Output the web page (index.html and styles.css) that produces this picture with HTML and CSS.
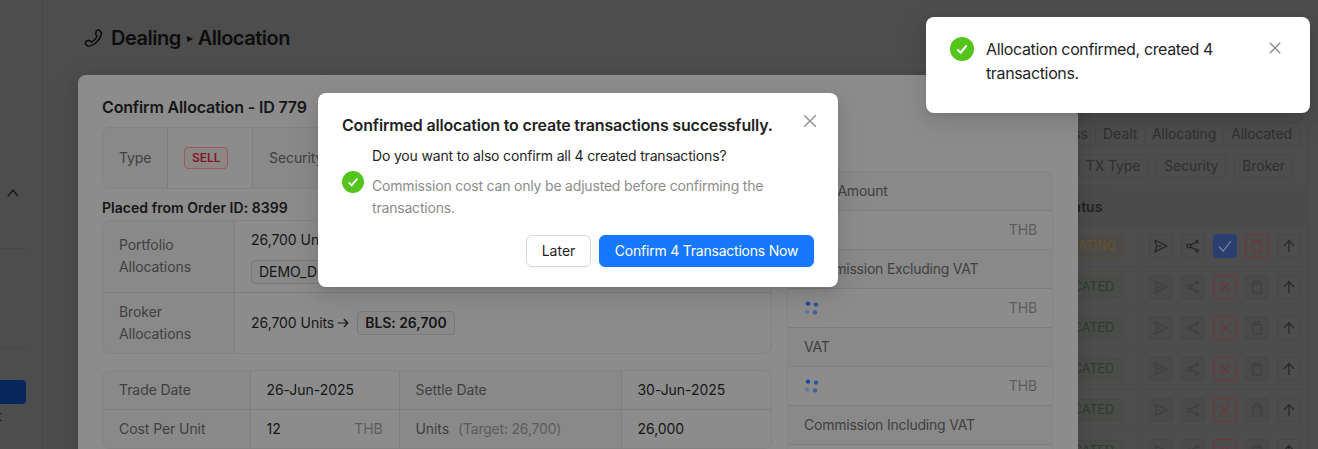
FILE: index.html
```html
<!DOCTYPE html>
<html lang="en">
<head>
<meta charset="utf-8">
<title>Dealing - Allocation</title>
<link rel="stylesheet" href="styles.css">
</head>
<body>
<svg class="defs" width="0" height="0">
  <defs>
    <symbol id="send" viewBox="0 0 16 16"><path d="M2 2.2 14 8 2 13.8 3.7 8ZM3.7 8H8.5"/></symbol>
    <symbol id="share" viewBox="0 0 16 16"><circle cx="4" cy="8" r="1.9"/><circle cx="12" cy="3.6" r="1.3"/><circle cx="12" cy="12.4" r="1.3"/><path d="M5.7 7.1 10.8 4.2M5.7 8.9l5.1 2.9"/></symbol>
    <symbol id="check" viewBox="0 0 16 16"><path d="M2 8.6 6.2 13 14 3"/></symbol>
    <symbol id="cross" viewBox="0 0 16 16"><path d="M2.8 2.8 13.2 13.2M13.2 2.8 2.8 13.2"/></symbol>
    <symbol id="trash" viewBox="0 0 16 16"><path d="M2.3 4.6H13.7M3.6 4.6V14H12.4V4.6M5.2 4.6V2.3H10.8V4.6"/></symbol>
    <symbol id="up" viewBox="0 0 16 16"><path d="M8 14V3M3 7.8 8 2.7 13 7.8"/></symbol>
    <symbol id="right" viewBox="0 0 16 16"><path d="M2 8H13.5M9 3.4 13.6 8 9 12.6"/></symbol>
    <symbol id="dots" viewBox="0 0 16 16"><circle cx="4" cy="3.6" r="2.2" fill="#1448a0"/><circle cx="12" cy="4.6" r="2.2" fill="#2c559b"/><circle cx="11" cy="12.4" r="2.2" fill="#405f98"/><circle cx="3" cy="11.6" r="2.2" fill="#6577a0"/></symbol>
    <symbol id="success" viewBox="0 0 22 22"><circle cx="11" cy="11" r="11" fill="#52c41a"/><path d="m6.7 11.4 3 3 5.6-6.8" fill="none" stroke="#fff" stroke-width="1.9"/></symbol>
  </defs>
</svg>
<div class="screen">
  <aside class="sidebar">
    <svg class="chevron" viewBox="0 0 12 8"><path d="M.8 7.4 6 1l5.2 6.4"/></svg>
    <div class="rule"></div>
    <div class="rule rule-second"></div>
    <div class="selected"></div>
    <div class="side-text">t</div>
  </aside>
  <main class="page">
    <h1 class="page-title">
      <svg class="phone" viewBox="0 0 20 20"><path d="M13.1 1.7 15.8 1 18.5 4.1C17.8 10.8 11.1 17.7 4.3 18.2L1.3 15.5 2.2 12.8 5.7 11.9 8 13.7C10.6 12.5 12.8 10.2 13.8 7.7L12.2 5.2Z"/></svg>
      <span>Dealing</span><i class="caret"></i><span>Allocation</span>
    </h1>
    <section class="orders">
      <div class="segments"><span class="seg-first">In Progress</span><span class="seg-dealt">Dealt</span><span class="seg-allocating">Allocating</span><span class="seg-allocated">Allocated</span></div>
      <div class="filters"><span>TX Type</span><span>Security</span><span>Broker</span></div>
      <div class="orders-head">Status</div>
      <div class="order active"><b class="status">ALLOCATING</b><div class="tools"><i><svg><use href="#send"/></svg></i><i><svg><use href="#share"/></svg></i><i class="primary"><svg><use href="#check"/></svg></i><i class="danger"><svg><use href="#trash"/></svg></i><i class="on"><svg><use href="#up"/></svg></i></div></div>
      <div class="order"><b class="status">ALLOCATED</b><div class="tools"><i><svg><use href="#send"/></svg></i><i><svg><use href="#share"/></svg></i><i class="danger"><svg><use href="#cross"/></svg></i><i><svg><use href="#trash"/></svg></i><i class="on"><svg><use href="#up"/></svg></i></div></div>
      <div class="order"><b class="status">ALLOCATED</b><div class="tools"><i><svg><use href="#send"/></svg></i><i><svg><use href="#share"/></svg></i><i class="danger"><svg><use href="#cross"/></svg></i><i><svg><use href="#trash"/></svg></i><i class="on"><svg><use href="#up"/></svg></i></div></div>
      <div class="order"><b class="status">ALLOCATED</b><div class="tools"><i><svg><use href="#send"/></svg></i><i><svg><use href="#share"/></svg></i><i class="danger"><svg><use href="#cross"/></svg></i><i><svg><use href="#trash"/></svg></i><i class="on"><svg><use href="#up"/></svg></i></div></div>
      <div class="order"><b class="status">ALLOCATED</b><div class="tools"><i><svg><use href="#send"/></svg></i><i><svg><use href="#share"/></svg></i><i class="danger"><svg><use href="#cross"/></svg></i><i><svg><use href="#trash"/></svg></i><i class="on"><svg><use href="#up"/></svg></i></div></div>
      <div class="order"><b class="status">ALLOCATED</b><div class="tools"><i><svg><use href="#send"/></svg></i><i><svg><use href="#share"/></svg></i><i class="danger"><svg><use href="#cross"/></svg></i><i><svg><use href="#trash"/></svg></i><i class="on"><svg><use href="#up"/></svg></i></div></div>
    </section>
  </main>

  <section class="modal">
    <h2 class="modal-title">Confirm Allocation - ID 779</h2>
    <div class="columns">
      <div class="left">
        <div class="desc summary">
          <div class="label">Type</div><div class="value"><span class="tag-sell">SELL</span></div>
          <div class="label">Security</div><div class="value"></div>
        </div>
        <h3 class="placed">Placed from Order ID: 8399</h3>
        <div class="desc allocations">
          <div class="label">Portfolio<br>Allocations</div>
          <div class="value stack"><span>26,700 Units</span><span class="tag">DEMO_DEALING</span></div>
          <div class="label">Broker<br>Allocations</div>
          <div class="value"><span>26,700 Units</span><svg class="arrow"><use href="#right"/></svg><span class="tag strong">BLS: 26,700</span></div>
        </div>
        <div class="desc terms">
          <div class="label">Trade Date</div><div class="value">26-Jun-2025</div>
          <div class="label">Settle Date</div><div class="value">30-Jun-2025</div>
          <div class="label">Cost Per Unit</div><div class="value between"><span>12</span><span class="unit">THB</span></div>
          <div class="label">Units <span class="target">(Target: 26,700)</span></div><div class="value">26,000</div>
        </div>
      </div>
      <div class="desc amounts">
        <div class="label">Cost Amount</div>
        <div class="value between"><svg class="spin"><use href="#dots"/></svg><span class="unit">THB</span></div>
        <div class="label">Commission Excluding VAT</div>
        <div class="value between"><svg class="spin"><use href="#dots"/></svg><span class="unit">THB</span></div>
        <div class="label">VAT</div>
        <div class="value between"><svg class="spin"><use href="#dots"/></svg><span class="unit">THB</span></div>
        <div class="label">Commission Including VAT</div>
        <div class="value"></div>
      </div>
    </div>
  </section>

  <section class="dialog">
    <header><h2>Confirmed allocation to create transactions successfully.</h2><svg class="close"><use href="#cross"/></svg></header>
    <div class="message">
      <svg class="ok"><use href="#success"/></svg>
      <div><p class="question">Do you want to also confirm all 4 created transactions?</p><p class="hint">Commission cost can only be adjusted before confirming the<br>transactions.</p></div>
    </div>
    <footer><button class="btn">Later</button><button class="btn btn-primary">Confirm 4 Transactions Now</button></footer>
  </section>

  <section class="toast">
    <svg class="ok"><use href="#success"/></svg>
    <p>Allocation confirmed, created 4<br>transactions.</p>
    <svg class="close"><use href="#cross"/></svg>
  </section>
</div>
</body>
</html>
```
FILE: styles.css
```css
* { box-sizing: border-box; }
body { margin: 0; font: 14px/22px Inter, "Liberation Sans", sans-serif; color: #161616; }
h1, h2, h3, p { margin: 0; }
svg { fill: none; stroke: currentColor; flex: none; }
.defs { position: absolute; }
#dots, .ok { stroke: none; }
.screen { position: relative; width: 1318px; height: 449px; overflow: hidden; background: #4d4d4d; display: flex; }

.sidebar { width: 43px; flex: none; border-right: 1px solid #484848; padding-top: 189px; }
.chevron { display: block; width: 12px; height: 8px; margin-left: 7px; color: #151515; stroke-width: 1.3; }
.rule { width: 26px; height: 1px; background: #474747; margin-top: 51px; }
.rule-second { margin-top: 98px; }
.selected { width: 26px; height: 24px; margin-top: 32px; background: #07275c; border-radius: 0 4px 4px 0; }
.side-text { margin: 1px 0 0 -3px; color: #111; }

.page { flex: 1; padding: 22px 9px 0 41px; }
.page-title { display: flex; align-items: center; height: 32px; font-size: 20px; font-weight: 600; letter-spacing: -.5px; color: #0d0d0d; }
.phone { width: 19px; height: 19px; margin-right: 8px; stroke-width: 1.6; }
.caret { border-left: 6px solid #0d0d0d; border-top: 3.5px solid transparent; border-bottom: 3.5px solid transparent; margin: 2px 5px 0 6px; }
.orders { margin-top: 68px; border-right: 1px solid #494949; color: #303030; }
.segments { display: flex; justify-content: flex-end; padding-right: 8px; }
.segments span, .filters span { height: 24px; border: 1px solid #484848; padding: 0 7px; line-height: 22px; white-space: nowrap; text-align: center; }
.segments span + span { border-left: 0; }
.segments span:last-child { border-radius: 0 4px 4px 0; }
.seg-dealt { width: 49px; }
.seg-allocating { width: 79px; letter-spacing: -.15px; }
.seg-allocated { width: 76px; letter-spacing: -.15px; }
.filters { display: flex; justify-content: flex-end; gap: 8px; padding: 8px 15px 0 0; letter-spacing: -.12px; }
.filters span { border-radius: 4px; }
.orders-head { margin-top: 8px; height: 39px; line-height: 39px; padding-left: 975px; background: #4b4b4b; border-top: 1px solid #494949; font-weight: 600; color: #222; }
.order { height: 41px; display: flex; align-items: center; justify-content: flex-end; border-top: 1px solid #494949; }
.status { height: 22px; line-height: 20px; padding: 0 8px; margin-right: 18px; border: 1px solid #454b40; border-radius: 4px; background: #4a4c49; color: #2b3d2b; font-weight: 400; font-size: 12.5px; }
.active .status { border-color: #514a3d; background: #4d4b47; color: #69532f; margin-right: 16px; }
.tools { display: flex; align-items: center; gap: 8px; height: 39px; padding: 0 7px; border-left: 1px solid #494949; }
.tools i { width: 24px; height: 24px; display: grid; place-items: center; border: 1px solid #474747; border-radius: 4px; color: #3f3f3f; background: #4a4a4a; }
.active .tools i, .tools i.on { color: #252525; background: #4d4d4d; }
.tools svg { width: 16px; height: 16px; stroke-width: 1.2; }
.tools .danger, .active .tools .danger { border-color: #6e3638; color: #6e3638; background: #4d4d4d; }
.active .tools .primary { border-color: #283f70; background: #283f70; color: #80899c; }

.modal { position: absolute; left: 78px; top: 75px; width: 1000px; height: 500px; padding: 20px 25px 0 24px; background: #8c8c8c; border-radius: 8px; box-shadow: 0 6px 16px rgba(0,0,0,.08), 0 3px 6px -4px rgba(0,0,0,.12), 0 9px 28px 8px rgba(0,0,0,.05); }
.modal-title { font-size: 16px; line-height: 24px; font-weight: 600; letter-spacing: -.15px; height: 32px; }
.columns { display: grid; grid-template-columns: 669.5px 266px; gap: 15.5px; }
.desc { display: grid; border: 1px solid #838383; border-radius: 8px; overflow: hidden; }
.label, .value { display: flex; align-items: center; padding: 0 16px; border-right: 1px solid #7e7e7e; border-bottom: 1px solid #7e7e7e; white-space: nowrap; }
.label { background: #898989; color: #404040; letter-spacing: -.08px; }
.value { letter-spacing: -.05px; }
.between { justify-content: space-between; }
.summary { grid-template-columns: 65px 85px 98px 1fr; height: 62px; }
.tag-sell { height: 22px; line-height: 20px; padding: 0 7px; border: 1px solid #9b5b59; border-radius: 4px; background: #8e8685; color: #801824; font-size: 12px; font-weight: 600; }
.placed { font-size: 14px; line-height: 22px; padding-top: 8px; height: 31px; font-weight: 600; letter-spacing: .04px; }
.allocations { grid-template-columns: 132px 1fr; grid-template-rows: 72px 60px; height: 134px; }
.allocations > .label:first-child { padding-bottom: 2px; }
.value.stack { flex-direction: column; align-items: flex-start; justify-content: center; gap: 9px; }
.tag { height: 24px; line-height: 22px; padding: 0 7px; border: 1px solid #7a7a7a; border-radius: 4px; background: #898989; }
.strong { font-weight: 600; }
.arrow { width: 14px; height: 14px; margin: 0 7px 0 2px; stroke-width: 1.4; }
.terms { margin-top: 16px; grid-template-columns: 147.5px 149px 222px 1fr; grid-template-rows: 39px 38px; }
.unit { color: #5c5c5c; letter-spacing: -.15px; margin-right: -1px; }
.terms .unit { margin-right: 0; }
.target { color: #5c5c5c; margin-left: 9px; letter-spacing: -.2px; }
.amounts { margin-top: 44px; grid-auto-rows: 39px; height: 330px; }
.amounts .label { letter-spacing: -.22px; }
.spin { width: 16px; height: 16px; }
.allocations > :nth-child(2n), .terms > :nth-child(4n), .amounts > *, .summary > :last-child { border-right: 0; }
.summary > *, .terms > :nth-child(n+5), .allocations > :nth-child(n+3) { border-bottom: 0; }

.dialog { position: absolute; left: 318px; top: 93px; width: 520px; height: 194px; padding: 20px 24px; background: #fff; border-radius: 8px; color: #1f1f1f; box-shadow: 0 6px 16px rgba(0,0,0,.08), 0 3px 6px -4px rgba(0,0,0,.12), 0 9px 28px 8px rgba(0,0,0,.05); }
.dialog header { display: flex; justify-content: space-between; height: 32px; }
.dialog h2 { font-size: 16px; line-height: 24px; font-weight: 600; letter-spacing: -.18px; white-space: nowrap; }
.close { width: 16px; height: 16px; color: #8c8c8c; stroke-width: 1.3; }
.dialog .close { width: 18px; height: 18px; margin: -1px -5px 0 0; stroke-width: 1.2; }
.message { display: flex; align-items: center; gap: 8px; height: 74px; }
.ok { width: 22px; height: 22px; }
.question { letter-spacing: -.17px; white-space: nowrap; }
.hint { color: #8c8c8c; margin-top: 8px; white-space: nowrap; letter-spacing: -.19px; }
.dialog footer { display: flex; justify-content: flex-end; gap: 8px; margin-top: 16px; }
.btn { height: 32px; padding: 0; width: 65px; border: 1px solid #d9d9d9; border-radius: 6px; background: #fff; color: #1f1f1f; font: inherit; white-space: nowrap; box-shadow: 0 2px 0 rgba(0,0,0,.02); }
.btn-primary { width: 215px; background: #1677ff; border-color: #1677ff; color: #fff; letter-spacing: -.22px; }

.toast { position: absolute; left: 926px; top: 17px; width: 384px; height: 96px; padding: 20px 27px 0 24px; display: flex; background: #fff; border-radius: 8px; color: #1f1f1f; font-size: 16px; line-height: 24px; letter-spacing: -.36px; box-shadow: 0 6px 16px rgba(0,0,0,.08), 0 3px 6px -4px rgba(0,0,0,.12), 0 9px 28px 8px rgba(0,0,0,.05); }
.toast .ok { width: 24px; height: 24px; margin-right: 12px; }
.toast p { flex: 1; white-space: nowrap; }
.toast .close { margin-top: 3px; }
```
